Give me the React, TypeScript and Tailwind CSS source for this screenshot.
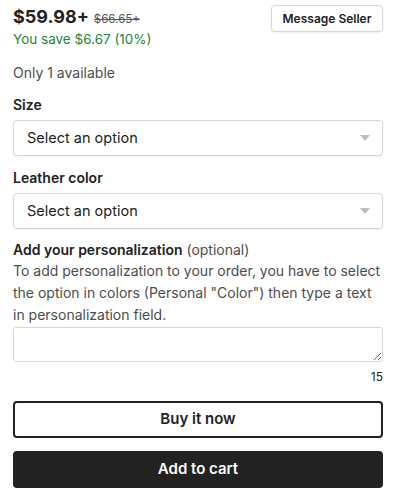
const SELECTS = [
  { label: "Size", placeholder: "Select an option" },
  { label: "Leather color", placeholder: "Select an option" },
];

const Caret = () => (
  <svg width="10" height="6" viewBox="0 0 10 6" className="shrink-0">
    <path d="M0 0h10L5 6z" fill="#bdbdbd" />
  </svg>
);

const App = () => {
  return (
    <main className="w-[401px] h-[499px] bg-white pl-[13px] pr-[18px] pt-[4px] font-['Inter',sans-serif] text-[#222]">
      {/* price row */}
      <div className="flex items-start justify-between">
        <div className="flex flex-col">
          <div className="flex items-baseline gap-[5px]">
            <span className="text-[18px] font-bold leading-[26px]">$59.98+</span>
            <span className="text-[11.5px] text-[#595959] line-through">$66.65+</span>
          </div>
          <p className="text-[13.5px] leading-[18px] text-[#258635]">You save $6.67 (10%)</p>
        </div>
        <button className="mt-[1px] h-[27px] w-[112px] rounded-[4px] border border-[#d6d6d6] bg-white text-[12px] font-semibold shadow-[0_1px_2px_rgba(0,0,0,0.08)]">
          Message Seller
        </button>
      </div>

      <p className="mt-[15px] text-[14px] leading-[20px] text-[#4d4d4d]">Only 1 available</p>

      {/* variation selects */}
      {SELECTS.map((select) => (
        <div key={select.label} className="mt-[12px]">
          <label className="block text-[14px] font-semibold leading-[20px] text-[#222]">
            {select.label}
          </label>
          <div className="mt-[5px] flex h-[36px] items-center justify-between rounded-[4px] border border-[#d6d6d6] pl-[13px] pr-[12px] shadow-[0_1px_2px_rgba(0,0,0,0.06)]">
            <span className="text-[14.5px] text-[#222]">{select.placeholder}</span>
            <Caret />
          </div>
        </div>
      ))}

      {/* personalization */}
      <div className="mt-[11px]">
        <p className="text-[14px] leading-[20px]">
          <span className="font-semibold">Add your personalization</span>{" "}
          <span className="text-[#4d4d4d]">(optional)</span>
        </p>
        <p className="text-[14px] leading-[22px] text-[#4d4d4d]">
          To add personalization to your order, you have to select the option in colors (Personal "Color") then type a text in personalization field.
        </p>
        <textarea className="mt-[1px] block h-[35px] w-full resize-y rounded-[3px] border border-[#d6d6d6] bg-white px-2 outline-none" />
        <p className="mt-[7px] text-right text-[12px] leading-[16px] text-[#222]">15</p>
      </div>

      {/* actions */}
      <div className="mt-[16px] flex flex-col gap-[13px]">
        <button className="h-[37px] w-full rounded-[4px] border-2 border-[#222] bg-white text-[15px] font-semibold text-[#222]">
          Buy it now
        </button>
        <button className="h-[37px] w-full rounded-[4px] bg-[#222] text-[15px] font-semibold text-white">
          Add to cart
        </button>
      </div>
    </main>
  );
};

export default App;
